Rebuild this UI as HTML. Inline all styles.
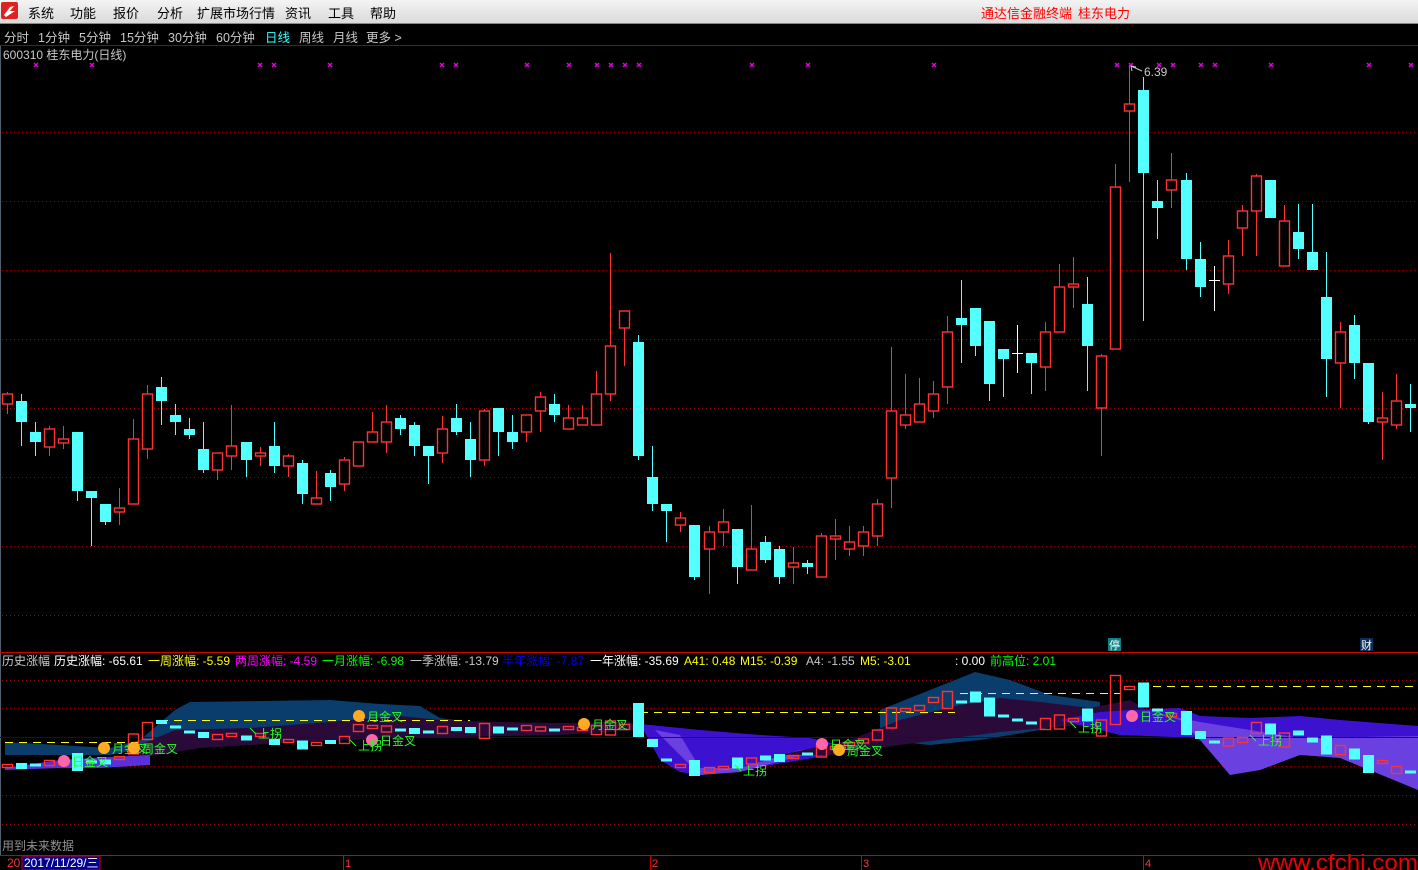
<!DOCTYPE html>
<html><head><meta charset="utf-8"><style>
body{margin:0;width:1418px;height:870px;background:#000;overflow:hidden;font-family:"Liberation Sans","Noto Sans CJK SC",sans-serif}
#menu{position:absolute;left:0;top:0;width:1418px;height:23px;background:linear-gradient(#f4f4f4,#dadada);border-bottom:1px solid #888}
.m{position:absolute;top:3px;font-size:13px;color:#000}
.r{position:absolute;top:3px;font-size:13px;color:#f00}
#tb{position:absolute;top:24px;left:0;width:1418px;height:21px;border-bottom:1px solid #a00000;font-size:12.5px;color:#c8c8c8}
#tb span{position:absolute;top:3px}
svg{position:absolute;left:0;top:0}
</style></head><body>
<div id="menu">
<div style="position:absolute;left:1px;top:2px;width:17px;height:17px;background:#d22;border-radius:2px"><svg width="17" height="17"><path d="M3 13 L9 5 L13 4 L9 9 L14 9 L5 15Z" fill="#fff"/></svg></div>
<span class="m" style="left:28px">系统</span><span class="m" style="left:70px">功能</span><span class="m" style="left:113px">报价</span><span class="m" style="left:157px">分析</span><span class="m" style="left:197px">扩展市场行情</span><span class="m" style="left:285px">资讯</span><span class="m" style="left:328px">工具</span><span class="m" style="left:370px">帮助</span>
<span class="r" style="left:981px">通达信金融终端</span><span class="r" style="left:1078px">桂东电力</span>
</div>
<div id="tb"><span style="left:4px">分时</span><span style="left:38px">1分钟</span><span style="left:79px">5分钟</span><span style="left:120px">15分钟</span><span style="left:168px">30分钟</span><span style="left:216px">60分钟</span><span style="left:265px;color:#3ff">日线</span><span style="left:299px">周线</span><span style="left:333px">月线</span><span style="left:366px">更多 &gt;</span></div>
<svg id="s" width="1418" height="870" style="top:0">
<line x1="0.5" y1="46" x2="0.5" y2="855" stroke="#506070"/>
<text x="3" y="59" fill="#c8c8c8" font-size="12">600310 桂东电力(日线)</text>
<g id="grid" stroke="#a00000" stroke-dasharray="1 3"></g>
<g id="marks" stroke="#e000e0" stroke-width="1.5"></g>
<g id="main"></g>
<path d="M1131 66 L1136 67 M1131 66 L1132 71 M1131 66 L1142 71" stroke="#c8c8c8" fill="none"/>
<text x="1144" y="76" fill="#c8c8c8" font-size="12">6.39</text>
<rect x="1108" y="638" width="13" height="13" fill="#0a8080"/><text x="1109" y="649" fill="#fff" font-size="11">停</text>
<rect x="1360" y="638" width="13" height="13" fill="#08305a"/><text x="1361" y="649" fill="#fff" font-size="11">财</text>
<line x1="0" y1="652.5" x2="1418" y2="652.5" stroke="#d00000"/>
<text y="665" font-size="12"><tspan x="2" fill="#c8c8c8">历史涨幅</tspan><tspan x="54" fill="#fff">历史涨幅: -65.61</tspan><tspan x="148" fill="#ff0">一周涨幅: -5.59</tspan><tspan x="235" fill="#f0f">两周涨幅: -4.59</tspan><tspan x="322" fill="#0f0">一月涨幅: -6.98</tspan><tspan x="410" fill="#c8c8c8">一季涨幅: -13.79</tspan><tspan x="502" fill="#00f">半年涨幅: -7.87</tspan><tspan x="590" fill="#fff">一年涨幅: -35.69</tspan><tspan x="684" fill="#ff0">A41: 0.48</tspan><tspan x="740" fill="#ff0">M15: -0.39</tspan><tspan x="806" fill="#c8c8c8">A4: -1.55</tspan><tspan x="860" fill="#ff0">M5: -3.01</tspan><tspan x="955" fill="#fff">: 0.00</tspan><tspan x="990" fill="#0f0">前高位: 2.01</tspan></text>
<g id="ind"></g>
<text x="2" y="850" fill="#909090" font-size="12">用到未来数据</text>
<line x1="0" y1="855.5" x2="1418" y2="855.5" stroke="#d00000"/>
<text x="7" y="867" fill="#f33" font-size="12">20</text>
<rect x="22" y="856" width="78" height="14" fill="#000090" stroke="#d00000"/>
<text x="24" y="867" fill="#fff" font-size="12">2017/11/29/三</text>
<g fill="#f33" font-size="11"><text x="345" y="867">1</text><text x="652" y="867">2</text><text x="863" y="867">3</text><text x="1145" y="867">4</text></g>
<g stroke="#d00000"><line x1="343.5" y1="856" x2="343.5" y2="870"/><line x1="650.5" y1="856" x2="650.5" y2="870"/><line x1="861.5" y1="856" x2="861.5" y2="870"/><line x1="1143.5" y1="856" x2="1143.5" y2="870"/></g>
<text x="1258" y="870" fill="#e00" font-size="22" textLength="160" lengthAdjust="spacingAndGlyphs">www.cfchi.com</text>
</svg>
<script>
var D=[[394,404,392,414,'r'],[401,422,394,446,'c'],[432,442,422,456,'c'],[429,447,426,456,'r'],[439,443,426,449,'r'],[432,491,432,501,'c'],[491,498,491,546,'c'],[504,522,504,525,'c'],[508,512,488,525,'r'],[439,504,419,504,'r'],[394,449,385,459,'r'],[387,401,377,425,'c'],[415,422,404,435,'c'],[429,435,418,439,'c'],[449,470,422,473,'c'],[453,470,453,480,'r'],[446,456,405,470,'r'],[442,460,442,477,'c'],[453,456,447,466,'r'],[446,466,422,473,'c'],[456,466,454,477,'r'],[463,494,460,504,'c'],[498,504,471,504,'r'],[473,487,470,501,'c'],[460,484,457,491,'r'],[442,466,442,466,'r'],[432,442,412,442,'r'],[422,442,405,453,'r'],[418,429,415,435,'c'],[425,446,422,456,'c'],[446,456,446,484,'c'],[429,453,416,463,'r'],[418,432,404,435,'c'],[439,460,422,477,'c'],[411,460,409,466,'r'],[408,432,408,456,'c'],[432,442,415,449,'c'],[415,432,415,442,'r'],[397,411,392,432,'r'],[404,415,394,422,'c'],[418,429,405,429,'r'],[418,425,405,425,'r'],[394,425,371,425,'r'],[346,394,253,401,'r'],[311,328,311,366,'r'],[342,456,335,460,'c'],[477,504,446,511,'c'],[504,511,504,542,'c'],[518,525,512,532,'r'],[525,577,525,580,'c'],[532,549,526,594,'r'],[522,532,509,546,'r'],[529,567,529,584,'c'],[549,570,505,570,'r'],[542,560,536,563,'c'],[549,577,546,584,'c'],[563,567,547,584,'r'],[563,567,560,574,'c'],[536,577,533,577,'r'],[536,539,519,560,'r'],[542,549,526,556,'r'],[532,546,526,556,'r'],[504,536,499,546,'r'],[411,478,347,508,'r'],[415,425,374,429,'r'],[404,422,378,422,'r'],[394,411,381,418,'r'],[332,387,316,404,'r'],[318,325,280,363,'c'],[308,346,308,356,'c'],[321,384,321,401,'c'],[349,359,349,397,'c'],[353,353,325,373,'w'],[353,363,353,394,'c'],[332,367,322,391,'r'],[287,332,264,332,'r'],[284,287,257,308,'r'],[304,346,277,391,'c'],[356,408,354,456,'r'],[187,349,164,349,'r'],[104,111,65,182,'r'],[90,173,77,321,'c'],[201,208,180,239,'c'],[180,190,153,208,'r'],[180,259,173,270,'c'],[259,287,242,297,'c'],[280,280,266,311,'w'],[256,284,240,294,'r'],[211,228,205,256,'r'],[176,211,174,256,'r'],[180,218,180,218,'c'],[221,266,205,266,'r'],[232,249,204,259,'c'],[252,270,204,270,'c'],[297,359,252,397,'c'],[332,363,322,408,'r'],[325,363,315,379,'c'],[363,422,363,424,'c'],[418,422,392,460,'r'],[401,425,374,429,'r'],[404,408,384,432,'c']];
var IY=[766,766,765,763,763,762,762,762,758,744,731,722,727,732,735,737,735,738,735,742,741,745,744,742,740,728,727,729,730,731,732,730,729,730,731,730,729,728,729,730,728,729,730,728,727,720,743,760,766,768,770,768,763,761,758,758,757,754,751,748,744,741,735,718,710,708,700,700,702,697,707,716,720,723,724,722,720,715,728,700,688,695,710,715,723,735,742,742,740,728,729,740,733,740,745,750,754,764,762,770,772];
var NS='http://www.w3.org/2000/svg';
function el(p,t,a){var e=document.createElementNS(NS,t);for(var k in a)e.setAttribute(k,a[k]);p.appendChild(e);return e}
var g=document.getElementById('grid');
[132,201,270,339,408,477,546,615,680,708,766,795,824].forEach(function(y){el(g,'line',{x1:2,x2:1418,y1:y+.5,y2:y+.5})});
var mk=document.getElementById('marks');
[36,92,260,274,330,442,456,527,569,597,611,625,639,752,808,934,1117,1131,1159,1173,1201,1215,1271,1369,1411].forEach(function(x){el(mk,'path',{d:'M'+(x-2)+' 63L'+(x+2)+' 67M'+(x+2)+' 63L'+(x-2)+' 67'})});
var ind=document.getElementById('ind');
function poly(pts,f){el(ind,'polygon',{points:pts,fill:f})}
poly('5,742 60,745 110,748 140,740 175,710 190,702 330,700 380,704 420,706 440,718 470,722 450,735 300,738 160,745 110,755 5,755','#0a3c6c');
poly('140,745 175,730 250,728 330,722 400,716 440,720 500,722 560,723 630,722 640,730 560,735 400,738 300,742 200,748 140,758','#2a0a38');
poly('5,768 60,760 110,757 150,755 150,765 100,768 60,768 5,770','#5a30d8');
poly('640,724 700,730 760,735 810,738 840,745 830,755 790,762 740,770 700,775 680,772 660,760','#3c12d0');
poly('655,730 680,735 700,768 740,768 800,750 830,748 800,756 740,772 700,775','#6a40e0');
poly('880,710 930,690 975,672 1010,680 1050,695 1100,702 1100,712 1040,730 980,740 930,745 880,740','#0a3c6c');
poly('780,755 850,740 900,720 960,705 1000,698 1040,702 1090,708 1130,700 1150,712 1080,725 1000,732 900,745 830,755','#2a0a38');
poly('1060,720 1100,712 1130,710 1180,708 1200,716 1250,718 1300,716 1340,720 1418,726 1418,738 1200,738 1120,735','#3c12d0');
poly('1150,712 1180,720 1200,740 1230,775 1260,770 1300,755 1340,758 1418,790 1418,736 1300,738 1200,722','#6a40e0');
el(ind,'line',{x1:0,x2:1418,y1:737.5,y2:737.5,stroke:'#0000c0'});
[[5,140,742],[160,470,720],[640,955,712],[960,1120,693],[1125,1418,686]].forEach(function(a){el(ind,'line',{x1:a[0],x2:a[1],y1:a[2]+.5,y2:a[2]+.5,stroke:'#ff0','stroke-dasharray':'8 6'})});
var m=document.getElementById('main');
D.forEach(function(d,i){var x=Math.round(7+14.03*i),col=d[4]=='r'?'#ff3232':d[4]=='c'?'#54ffff':'#fff';
el(m,'line',{x1:x+.5,x2:x+.5,y1:d[2],y2:d[3],stroke:col});
if(d[4]=='w'){el(m,'line',{x1:x-5,x2:x+6,y1:d[0]+.5,y2:d[0]+.5,stroke:col});}
else if(d[4]=='r'){el(m,'rect',{x:x-4.5,y:d[0],width:10,height:Math.max(1,d[1]-d[0]),fill:'#000',stroke:col,'stroke-width':1.4});}
else el(m,'rect',{x:x-5,y:d[0],width:11,height:Math.max(2,d[1]-d[0]),fill:col});
var h=Math.max(3,Math.round((d[1]-d[0])*0.3)),y=IY[i]-h/2;
if(d[4]=='r')el(ind,'rect',{x:x-4.5,y:y,width:10,height:h,fill:'none',stroke:'#ff3232','stroke-width':1.4});
else el(ind,'rect',{x:x-5,y:y,width:11,height:h,fill:'#54ffff'});
});
[[60,765,'日金叉','#f6a'],[100,752,'月金叉','#fa2'],[130,752,'周金叉','#fa2'],[355,720,'月金叉','#fa2'],[368,744,'日金叉','#f6a'],[580,728,'月金叉','#fa2'],[818,748,'日金叉','#f6a'],[835,754,'周金叉','#fa2'],[1128,720,'日金叉','#f6a']].forEach(function(a){
el(ind,'circle',{cx:a[0]+4,cy:a[1]-4,r:6,fill:a[3]});var t=el(ind,'text',{x:a[0]+12,y:a[1]+1,fill:'#2f2','font-size':12});t.textContent=a[2];});
[[250,738],[350,750],[735,775],[1070,732],[1250,745]].forEach(function(a){var t=el(ind,'text',{x:a[0]+8,y:a[1],fill:'#2f2','font-size':12});t.textContent='上拐';el(ind,'line',{x1:a[0],y1:a[1]-10,x2:a[0]+6,y2:a[1]-4,stroke:'#2f2'});});
</script>
</body></html>
